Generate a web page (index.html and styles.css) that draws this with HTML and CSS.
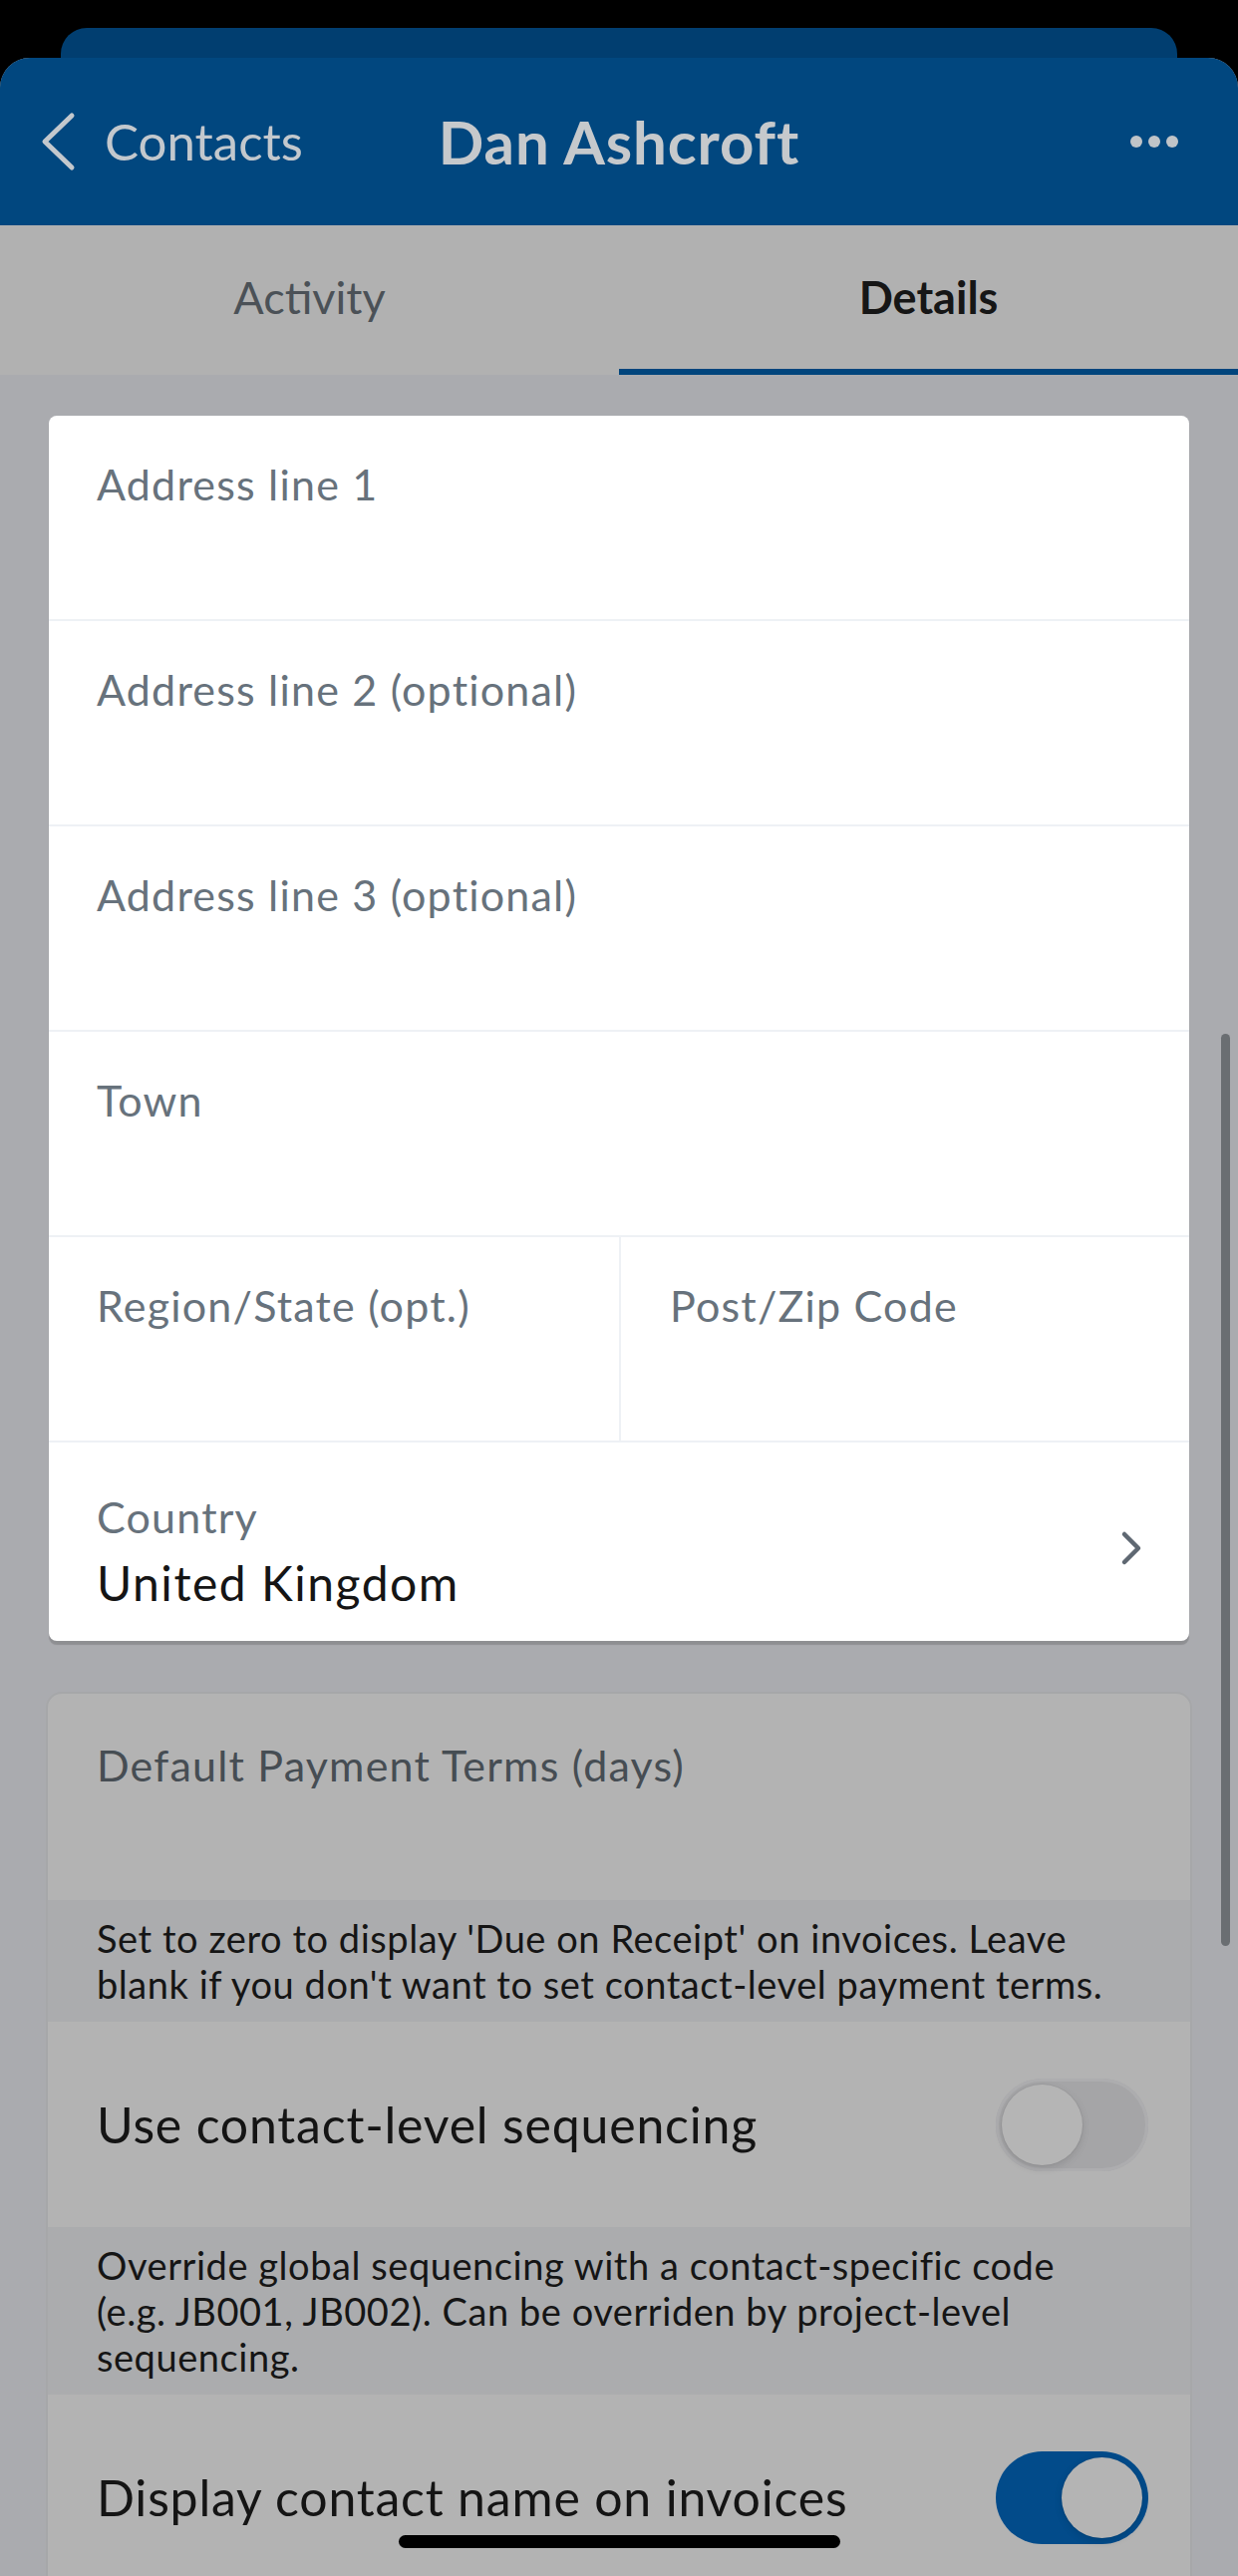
FILE: index.html
```html
<!DOCTYPE html>
<html lang="en">
<head>
<meta charset="utf-8">
<title>Dan Ashcroft – Details</title>
<link rel="stylesheet" href="styles.css">
</head>
<body>
<div class="screen">
  <div class="sheet-back"></div>
  <div class="sheet">
    <header class="navbar">
      <a class="back" href="#">
        <svg class="back-chevron" viewBox="0 0 36 60" width="36" height="60" aria-hidden="true">
          <polyline points="32,4 5,30 32,56" fill="none" stroke="currentColor" stroke-width="5" stroke-linecap="round" stroke-linejoin="round"/>
        </svg>
        <span>Contacts</span>
      </a>
      <h1 class="title">Dan Ashcroft</h1>
      <div class="more" aria-label="More"><span></span><span></span><span></span></div>
    </header>
    <nav class="tabs">
      <div class="tab">Activity</div>
      <div class="tab active">Details</div>
    </nav>
    <main class="content">
      <section class="card address">
        <div class="field"><span class="label">Address line 1</span></div>
        <div class="field"><span class="label">Address line 2 (optional)</span></div>
        <div class="field"><span class="label">Address line 3 (optional)</span></div>
        <div class="field"><span class="label">Town</span></div>
        <div class="field-pair">
          <div class="field half"><span class="label">Region/State (opt.)</span></div>
          <div class="field half"><span class="label">Post/Zip Code</span></div>
        </div>
        <div class="field select">
          <div class="select-text">
            <span class="label">Country</span>
            <span class="value">United Kingdom</span>
          </div>
          <svg class="select-chevron" viewBox="0 0 24 36" width="24" height="36" aria-hidden="true">
            <polyline points="5,4 19,18 5,32" fill="none" stroke="currentColor" stroke-width="4.5" stroke-linecap="round" stroke-linejoin="round"/>
          </svg>
        </div>
      </section>

      <section class="card settings">
        <div class="setting-field"><span class="label dim">Default Payment Terms (days)</span></div>
        <p class="help">Set to zero to display 'Due on Receipt' on invoices. Leave blank if you don't want to set contact-level payment terms.</p>
        <div class="toggle-row">
          <span class="toggle-label">Use contact-level sequencing</span>
          <span class="switch"><span class="knob"></span></span>
        </div>
        <p class="help">Override global sequencing with a contact-specific code (e.g. JB001, JB002). Can be overriden by project-level sequencing.</p>
        <div class="toggle-row">
          <span class="toggle-label">Display contact name on invoices</span>
          <span class="switch on"><span class="knob"></span></span>
        </div>
      </section>
    </main>
  </div>
  <div class="scrollbar"></div>
  <div class="home-indicator"></div>
</div>
</body>
</html>
```

FILE: styles.css
```css
* {
  box-sizing: border-box;
}

html, body {
  margin: 0;
  padding: 0;
  background: #000;
}

body {
  font-family: Lato, "Noto Sans", "Liberation Sans", sans-serif;
  width: 1242px;
  height: 2584px;
  overflow: hidden;
}

.screen {
  position: relative;
  width: 1242px;
  height: 2584px;
  overflow: hidden;
  padding-top: 28px;
  background: #000;
}

.sheet-back {
  height: 30px;
  margin: 0 61px;
  background: #013e70;
  border-radius: 26px 26px 0 0;
}

.sheet {
  background: #aaabaf;
  border-radius: 30px 30px 0 0;
  overflow: hidden;
  min-height: 2600px;
}

/* Nav bar */
.navbar {
  height: 168px;
  background: #01477f;
  display: grid;
  grid-template-columns: 1fr auto 1fr;
  align-items: center;
  padding: 0 60px;
}

.back {
  display: flex;
  align-items: center;
  gap: 29px;
  margin-left: -20px;
  color: #c3c8cd;
  text-decoration: none;
  font-size: 51px;
  line-height: 60px;
}

.back-chevron {
  display: block;
  flex: none;
}

.title {
  margin: 0;
  font-size: 60px;
  line-height: 66px;
  letter-spacing: 0.9px;
  font-weight: 700;
  color: #c6c9cc;
  text-align: center;
}

.more {
  justify-self: end;
  display: flex;
  gap: 6px;
}

.more span {
  width: 12px;
  height: 12px;
  border-radius: 50%;
  background: #c0c4c8;
}

/* Tabs */
.tabs {
  display: flex;
  height: 150px;
  background: #b1b1b1;
}

.tab {
  flex: 1;
  display: flex;
  align-items: center;
  justify-content: center;
  font-size: 45px;
  color: #4b5157;
  border-bottom: 6px solid transparent;
}

.tab.active {
  font-weight: 700;
  color: #161616;
  border-bottom-color: #01457d;
}

/* Content */
.content {
  padding-top: 41px;
}

.card.address {
  margin: 0 49px;
  background: #fff;
  border-radius: 8px;
  box-shadow: 0 4px 1px rgba(0, 0, 0, 0.16);
  overflow: hidden;
}

.field {
  height: 206px;
  padding: 44px 48px 0;
  border-bottom: 2px solid #eef1f5;
}

.label {
  display: block;
  font-size: 43px;
  line-height: 50px;
  letter-spacing: 1.2px;
  color: #67727c;
}

.field-pair {
  display: grid;
  grid-template-columns: 1fr 1fr;
}

.field.half + .field.half {
  border-left: 2px solid #eef1f5;
  padding-left: 49px;
}

.field.select {
  height: 199px;
  padding: 50px 48px 0;
  border-bottom: none;
  display: flex;
  justify-content: space-between;
  align-items: flex-start;
}

.select-text .value {
  display: block;
  margin-top: 13px;
  font-size: 48px;
  line-height: 56px;
  letter-spacing: 1.5px;
  color: #151515;
}

.select-chevron {
  display: block;
  color: #5f6872;
  margin-top: 38px;
  margin-right: -2px;
}

/* Settings card (dimmed) */
.card.settings {
  margin: 51px 46px 0;
  background: #b3b3b3;
  border: 2px solid #a6a7a9;
  border-radius: 16px;
  overflow: hidden;
}

.setting-field {
  height: 207px;
  padding: 47px 49px 0;
}

.label.dim {
  color: #464d53;
}

.help {
  margin: 0;
  background: #abacae;
  padding: 15px 72px 15px 49px;
  font-size: 38px;
  line-height: 46px;
  letter-spacing: 0.55px;
  color: #151515;
}

.toggle-row {
  height: 206px;
  padding: 0 42px 0 49px;
  display: flex;
  align-items: center;
  justify-content: space-between;
}

.toggle-label {
  font-size: 50px;
  letter-spacing: 0.8px;
  color: #141414;
}

.switch {
  position: relative;
  flex: none;
  width: 153px;
  height: 93px;
  border-radius: 47px;
  background: #a5a5a7;
  box-shadow: inset 0 0 0 3px #adadaf;
}

.switch .knob {
  position: absolute;
  top: 6px;
  left: 6px;
  width: 81px;
  height: 81px;
  border-radius: 50%;
  background: #b5b5b5;
  box-shadow: 0 3px 8px rgba(0, 0, 0, 0.12), 0 0 0 1px rgba(0, 0, 0, 0.04);
}

.switch.on {
  background: #024b8a;
  box-shadow: none;
}

.switch.on .knob {
  left: auto;
  right: 6px;
  background: #b4b4b4;
}

/* Overlays */
.scrollbar {
  position: absolute;
  left: 1225px;
  top: 1037px;
  width: 9px;
  height: 915px;
  border-radius: 5px;
  background: #6a6e72;
}

.home-indicator {
  position: absolute;
  left: 400px;
  top: 2543px;
  width: 443px;
  height: 13px;
  border-radius: 7px;
  background: #000;
}
```
